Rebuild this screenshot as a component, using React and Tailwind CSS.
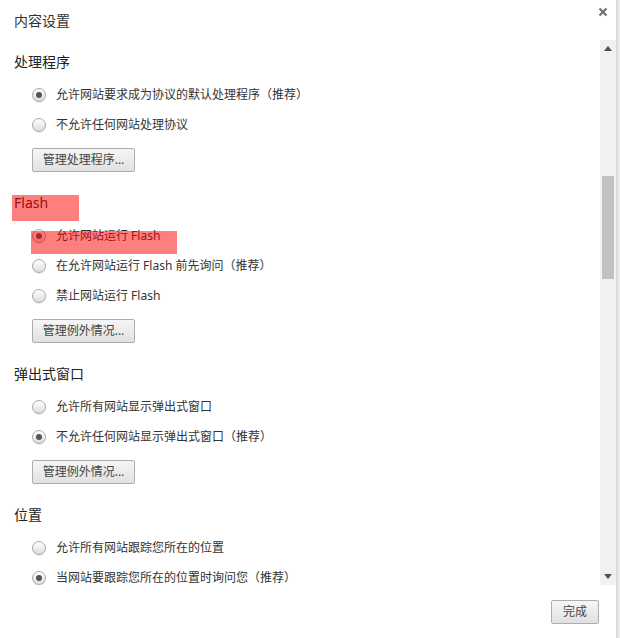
import React from "react";

const font = { fontFamily: '"Noto Sans", "Noto Sans CJK SC", sans-serif' };

const sections = [
  {
    title: "处理程序",
    options: ["允许网站要求成为协议的默认处理程序（推荐）", "不允许任何网站处理协议"],
    checked: 0,
    button: "管理处理程序...",
  },
  {
    title: "Flash",
    options: ["允许网站运行 Flash", "在允许网站运行 Flash 前先询问（推荐）", "禁止网站运行 Flash"],
    checked: 0,
    button: "管理例外情况...",
    highlight: true,
  },
  {
    title: "弹出式窗口",
    options: ["允许所有网站显示弹出式窗口", "不允许任何网站显示弹出式窗口（推荐）"],
    checked: 1,
    button: "管理例外情况...",
  },
  {
    title: "位置",
    options: ["允许所有网站跟踪您所在的位置", "当网站要跟踪您所在的位置时询问您（推荐）"],
    checked: 1,
  },
];

// 单选按钮
const Radio = ({ checked }) => (
  <span className="flex h-[14px] w-[14px] shrink-0 items-center justify-center rounded-full border border-[#a9a9a9] bg-gradient-to-b from-[#ffffff] to-[#dcdcdc] shadow-[0_1px_0_rgba(0,0,0,0.08)]">
    {checked && <span className="h-[6px] w-[6px] rounded-full bg-[#555]" />}
  </span>
);

const Button = ({ children, className = "" }) => (
  <button
    className={`flex h-[24px] items-center justify-center rounded-[2px] border border-[#adadad] bg-gradient-to-b from-[#f6f6f6] to-[#e1e1e1] text-[12px] text-[#444] ${className}`}
  >
    {children}
  </button>
);

const Section = ({ section }) => (
  <div className="relative mb-[21px]">
    <div className="h-[20px] pl-[14px] text-[14px] leading-[20px] text-[#222]">{section.title}</div>
    <div className="mt-[8px]">
      {section.options.map((opt, i) => (
        <div key={i} className="flex h-[30px] items-center pl-[32px]">
          <Radio checked={section.checked === i} />
          <span className="ml-[10px] text-[12px] text-[#333]">{opt}</span>
        </div>
      ))}
    </div>
    {section.button && (
      <div className="mt-[8px] pl-[32px]">
        <Button className="w-[103px]">{section.button}</Button>
      </div>
    )}
    {section.highlight && (
      <>
        <div className="absolute left-[12px] top-[2px] h-[26px] w-[67px] bg-[rgba(255,0,0,0.5)]" />
        <div className="absolute left-[31px] top-[38px] h-[23px] w-[146px] bg-[rgba(255,0,0,0.5)]" />
      </>
    )}
  </div>
);

export default function App() {
  return (
    <div className="flex h-[638px] w-[620px] bg-white" style={font}>
      <div className="flex w-[616px] flex-col">
        {/* 标题栏 */}
        <div className="flex h-[40px] items-center justify-between pl-[14px] pr-[8px]">
          <span className="text-[14px] text-[#333]">内容设置</span>
          <svg width="10" height="10" viewBox="0 0 10 10" className="-mt-[16px]">
            <path d="M1.5 1.5 L8.5 8.5 M8.5 1.5 L1.5 8.5" stroke="#6f6f6f" strokeWidth="2.2" />
          </svg>
        </div>

        {/* 可滚动区域 */}
        <div className="flex h-[545px]">
          <div className="flex-1 overflow-hidden pt-[12px]">
            {sections.map((s, i) => (
              <Section key={i} section={s} />
            ))}
          </div>
          <div className="flex w-[16px] flex-col items-center justify-between bg-[#f1f1f1] py-[6px]">
            <svg width="8" height="5" viewBox="0 0 8 5">
              <path d="M0 5 L4 0 L8 5 Z" fill="#505050" />
            </svg>
            <div className="flex-1 self-stretch px-[2px] pb-[295px] pt-[125px]">
              <div className="h-full w-full bg-[#c1c1c1]" />
            </div>
            <svg width="8" height="5" viewBox="0 0 8 5">
              <path d="M0 0 L8 0 L4 5 Z" fill="#505050" />
            </svg>
          </div>
        </div>

        {/* 底部 */}
        <div className="flex flex-1 items-start justify-end pr-[17px] pt-[15px]">
          <Button className="h-[23px] w-[48px] text-[#333]">完成</Button>
        </div>
      </div>
      <div className="w-[4px] bg-gradient-to-r from-[#d8d8d8] to-[#f0f0f0]" />
    </div>
  );
}
